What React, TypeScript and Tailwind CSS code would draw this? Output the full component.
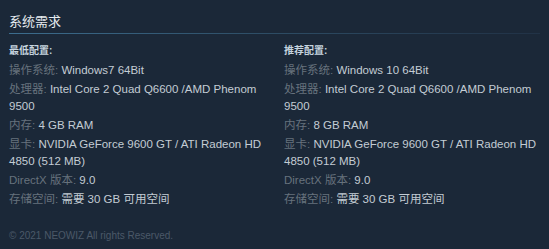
import React from "react";

type Row = { label: string; value: string };

const minReq: Row[] = [
  { label: "操作系统:", value: "Windows7 64Bit" },
  { label: "处理器:", value: "Intel Core 2 Quad Q6600 /AMD Phenom 9500" },
  { label: "内存:", value: "4 GB RAM" },
  { label: "显卡:", value: "NVIDIA GeForce 9600 GT / ATI Radeon HD 4850 (512 MB)" },
  { label: "DirectX 版本:", value: "9.0" },
  { label: "存储空间:", value: "需要 30 GB 可用空间" },
];

const recReq: Row[] = [
  { label: "操作系统:", value: "Windows 10 64Bit" },
  { label: "处理器:", value: "Intel Core 2 Quad Q6600 /AMD Phenom 9500" },
  { label: "内存:", value: "8 GB RAM" },
  { label: "显卡:", value: "NVIDIA GeForce 9600 GT / ATI Radeon HD 4850 (512 MB)" },
  { label: "DirectX 版本:", value: "9.0" },
  { label: "存储空间:", value: "需要 30 GB 可用空间" },
];

const font = { fontFamily: '"Liberation Sans", "Noto Sans CJK SC", Arial, sans-serif' };

function Column({ title, rows }: { title: string; rows: Row[] }) {
  return (
    <div>
      <div className="text-[10px] font-bold leading-[14px] text-[#c6d4df] mb-[4px]">{title}</div>
      <ul>
        {rows.map((r) => (
          <li key={r.label} className="text-[11.5px] leading-[17px] mb-[2px] text-[#c3ccd4]">
            <span className="text-[#67727d]">{r.label}</span> {r.value}
          </li>
        ))}
      </ul>
    </div>
  );
}

export default function App() {
  return (
    <div className="w-[549px] h-[249px] bg-[#1b2838] px-[9px] overflow-hidden" style={font}>
      <div className="pt-[12px] text-[13px] leading-[20px] text-[#e6ebef]">系统需求</div>
      <div className="mt-[1px] h-px bg-gradient-to-r from-[#3c6d8e] via-[#2d4c64] to-[#213246]" />
      <div className="mt-[10px] grid grid-cols-[260px_1fr] gap-x-[15px]">
        <Column title="最低配置:" rows={minReq} />
        <Column title="推荐配置:" rows={recReq} />
      </div>
      <div className="mt-[19px] text-[10px] leading-[14px] text-[#4b5968]">
        © 2021 NEOWIZ All rights Reserved.
      </div>
    </div>
  );
}
